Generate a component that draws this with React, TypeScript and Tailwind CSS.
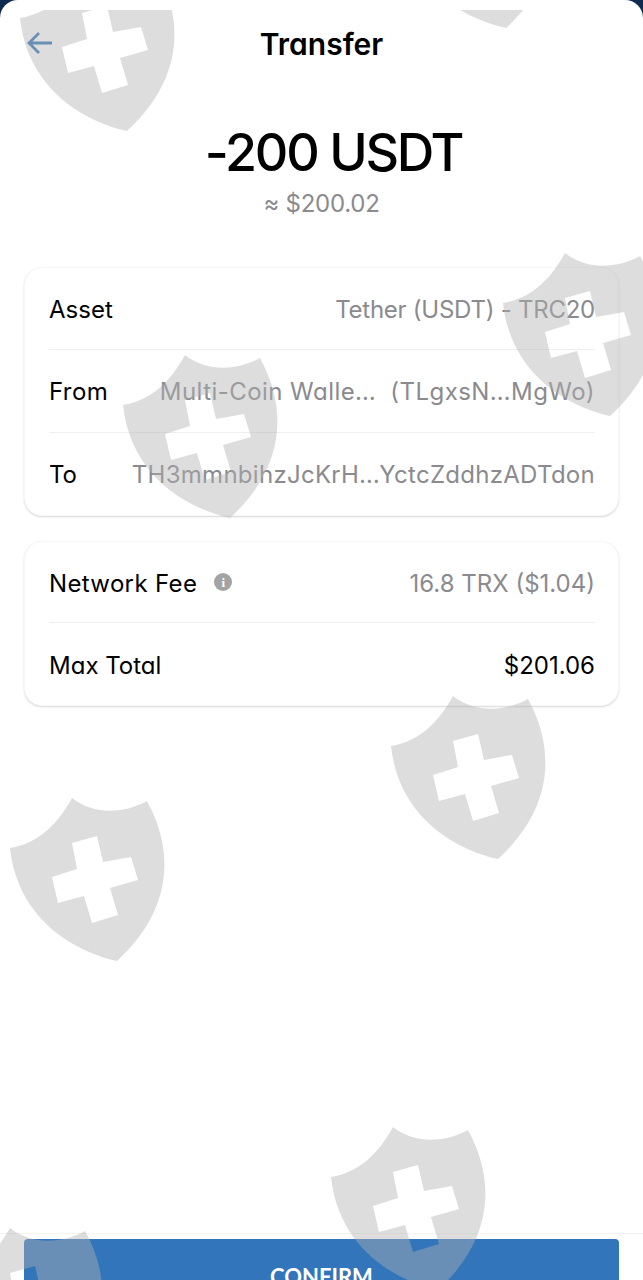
const shieldPath =
  "M62 0C85 18 115 15 137 3C163 50 165 110 107 163C70 155 8 125 0 50C30 45 48 25 62 0Z" +
  "M62 45L87 38L93 64L121 59L128 82L100 90L108 117L82 125L74 98L48 105L42 79L67 71Z";

function Shield({ className }: { className: string }) {
  return (
    <svg viewBox="0 0 155 163" className={`absolute h-[163px] w-[155px] ${className}`} aria-hidden>
      <path d={shieldPath} fill="#b2b2b2" fillOpacity="0.44" fillRule="evenodd" />
    </svg>
  );
}

function Row({
  label,
  value,
  strong,
  info,
  className = "h-[82.33px]",
}: {
  label: React.ReactNode;
  value: React.ReactNode;
  strong?: boolean;
  info?: boolean;
  className?: string;
}) {
  return (
    <div className={`flex items-center justify-between border-b border-[#efefef] pt-[3px] last:border-b-0 ${className}`}>
      <div className="flex shrink-0 items-center text-black">
        {label}
        {info && (
          <span className="ml-[17px] -mt-[3px] flex h-[18px] w-[18px] items-center justify-center rounded-full bg-[#a3a3a3] font-['Liberation_Serif',serif] text-[13px] font-bold leading-none text-white">
            i
          </span>
        )}
      </div>
      <div className={`whitespace-nowrap ${strong ? "text-black" : "text-[#8a8a8f]"}`}>{value}</div>
    </div>
  );
}

function Card({ children, className = "" }: { children: React.ReactNode; className?: string }) {
  return (
    <div className={`mx-6 rounded-[18px] border border-[#f7f7f7] bg-white pl-6 pr-[23px] shadow-[0_1px_2px_rgba(0,0,0,0.16)] ${className}`}>
      {children}
    </div>
  );
}

export default function App() {
  return (
    <div className="relative h-[1280px] w-[643px] overflow-hidden bg-[#0f2a4f] font-['Inter',sans-serif] text-[24px] [font-feature-settings:'cv11']">
      <div className="flex h-full flex-col rounded-t-[18px] bg-white">
        <header className="relative flex h-[87px] shrink-0 items-center justify-center">
          <svg
            viewBox="0 0 26 24"
            className="absolute left-[27px] top-[31px] h-[24px] w-[26px]"
            fill="none"
            stroke="#3375bb"
            strokeWidth="2.8"
            aria-hidden
          >
            <path d="M25 12H2M12 2L2 12l10 10" />
          </svg>
          <h1 className="text-[30px] font-semibold leading-none text-black">Transfer</h1>
        </header>

        <div className="mt-[33px] text-center">
          <div className="pl-[24px] text-[52px] font-medium leading-[66px] tracking-[-2.2px] text-black">-200 USDT</div>
          <div className="mt-[1px] text-[24px] leading-[34px] tracking-[-0.25px] text-[#8a8a8f]">≈ $200.02</div>
        </div>

        <Card className="mt-[46px]">
          <Row label="Asset" value={<span className="tracking-[-0.25px]">Tether (USDT) - TRC20</span>} />
          <Row
            label={<span className="tracking-[0.4px]">From</span>}
            value={
              <span className="flex gap-[14px] tracking-[0.45px]">
                <span>Multi-Coin Walle…</span>
                <span>(TLgxsN…MgWo)</span>
              </span>
            }
          />
          <Row label="To" value={<span className="tracking-[0.28px]">TH3mmnbihzJcKrH…YctcZddhzADTdon</span>} />
        </Card>

        <Card className="mt-[25px]">
          <Row
            label={<span className="tracking-[0.35px]">Network Fee</span>}
            info
            value="16.8 TRX ($1.04)"
            className="h-[81.5px]"
          />
          <Row label="Max Total" strong value="$201.06" className="h-[81.5px]" />
        </Card>

        <div className="flex-1" />

        <div className="-mb-[33px] shrink-0 border-t border-[#f3f3ef] px-6 pt-[5px]">
          <button className="flex h-[74px] w-full items-center justify-center rounded-[4px] bg-[#3375bb] font-['Lato',sans-serif] text-[22px] font-bold text-white">
            CONFIRM
          </button>
        </div>
      </div>

      <div className="pointer-events-none absolute inset-x-0 bottom-0 top-[10px] overflow-hidden">
        <Shield className="left-[20px] top-[-42px]" />
        <Shield className="left-[399px] top-[-145px]" />
        <Shield className="left-[503px] top-[243px]" />
        <Shield className="left-[123px] top-[345px]" />
        <Shield className="left-[391px] top-[686px]" />
        <Shield className="left-[10px] top-[788px]" />
        <Shield className="left-[331px] top-[1117px]" />
        <Shield className="left-[-52px] top-[1218px]" />
      </div>
    </div>
  );
}
